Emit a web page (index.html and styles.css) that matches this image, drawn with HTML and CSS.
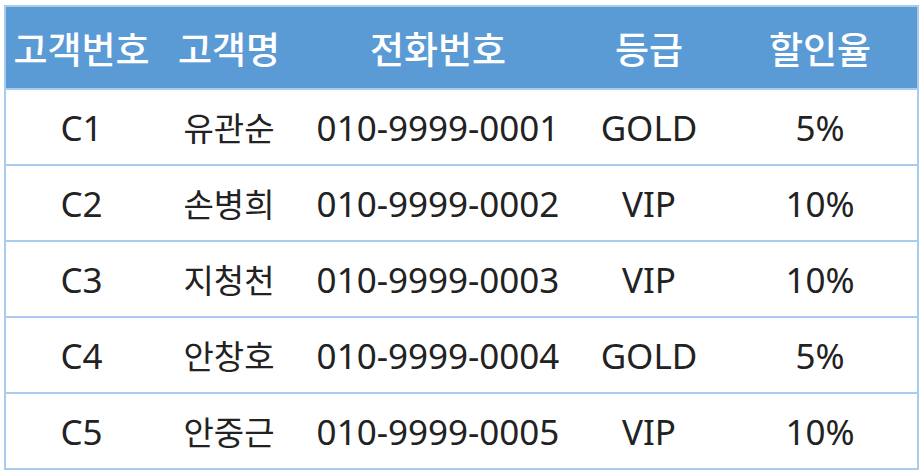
FILE: index.html
```html
<!DOCTYPE html>
<html lang="ko">
<head>
<meta charset="utf-8">
<link rel="stylesheet" href="styles.css">
</head>
<body>
<table class="grid">
  <colgroup>
    <col class="c1"><col class="c2"><col class="c3"><col class="c4"><col class="c5">
  </colgroup>
  <thead>
    <tr><th>고객번호</th><th>고객명</th><th>전화번호</th><th>등급</th><th>할인율</th></tr>
  </thead>
  <tbody>
    <tr><td>C1</td><td class="ko">유관순</td><td>010-9999-0001</td><td>GOLD</td><td>5%</td></tr>
    <tr><td>C2</td><td class="ko">손병희</td><td>010-9999-0002</td><td>VIP</td><td>10%</td></tr>
    <tr><td>C3</td><td class="ko">지청천</td><td>010-9999-0003</td><td>VIP</td><td>10%</td></tr>
    <tr><td>C4</td><td class="ko">안창호</td><td>010-9999-0004</td><td>GOLD</td><td>5%</td></tr>
    <tr><td>C5</td><td class="ko">안중근</td><td>010-9999-0005</td><td>VIP</td><td>10%</td></tr>
  </tbody>
</table>
</body>
</html>
```
FILE: styles.css
```css
html, body { margin: 0; padding: 0; background: #fff; }
body { padding: 5px 3px 0 4px; }
.grid {
  width: 913px;
  border-collapse: collapse;
  table-layout: fixed;
  font-family: "Noto Sans", "Noto Sans CJK KR", sans-serif;
  border: 2px solid #a9cbec;
}
.c1 { width: 152px; }
.c2 { width: 144px; }
.c3 { width: 274px; }
.c4 { width: 148px; }
.c5 { width: 195px; }
.grid th {
  background: #5b9bd5;
  color: #fff;
  font-family: "Noto Sans CJK KR", sans-serif;
  font-weight: 500;
  font-size: 37px;
  height: 81px;
  padding: 0;
  text-align: center;
}
.grid td {
  color: #222;
  font-size: 35px;
  height: 74px;
  padding: 0;
  text-align: center;
  border-top: 2px solid #a9cbec;
}
.grid td.ko {
  font-family: "Noto Sans CJK KR", sans-serif;
  font-size: 33px;
}
```
